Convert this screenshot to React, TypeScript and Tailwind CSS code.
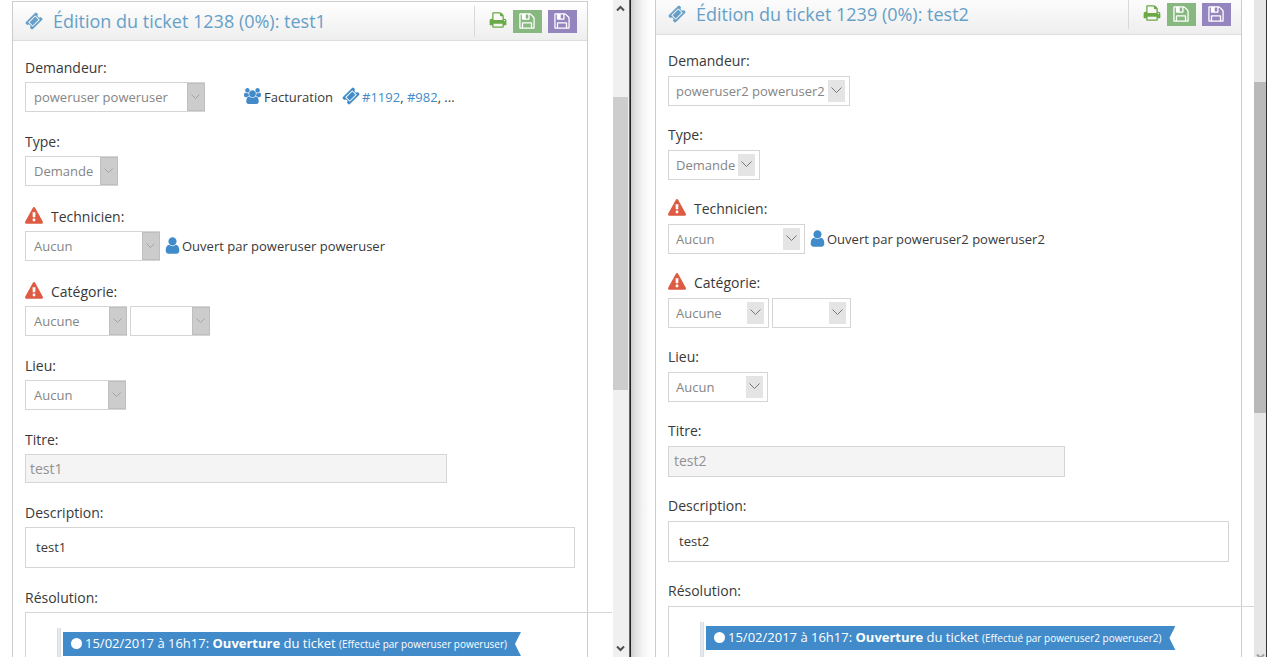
import { useId, type ReactNode } from "react";

const PATHS = {
  ticket:
    "M1024 452l316 316-572 572-316-316zm-211 979l618-618q19-19 19-45t-19-45l-362-362q-18-18-45-18t-45 18l-618 618q-19 19-19 45t19 45l362 362q18 18 45 18t45-18zm889-637l-907 908q-37 37-90.500 37t-90.500-37l-126-126q56-56 56-136t-56-136-136-56-136 56l-125-126q-37-37-37-90.500t37-90.500l907-906q37-37 90.500-37t90.500 37l125 125q-56 56-56 136t56 136 136 56 136-56l126 125q37 37 37 90.500t-37 90.500z",
  warning:
    "M1024 1375v-190q0-14-9.500-23.500t-22.500-9.500h-192q-13 0-22.500 9.500t-9.500 23.500v190q0 14 9.500 23.500t22.500 9.500h192q13 0 22.500-9.500t9.500-23.500zm-2-374l18-459q0-12-10-19-13-11-24-11h-220q-11 0-24 11-10 7-10 21l17 457q0 10 10 16.500t24 6.500h185q14 0 23.500-6.500t10.500-16.500zm-14-934l768 1408q35 63-2 126-17 29-46.500 46t-63.500 17h-1536q-34 0-63.500-17t-46.500-46q-37-63-2-126l768-1408q17-31 47-49t65-18 65 18 47 49z",
  user: "M1536 1399q0 109-62.500 187t-150.500 78h-854q-88 0-150.500-78t-62.500-187q0-85 8.500-160.500t31.500-152 58.500-131 94-89 134.500-34.500q131 128 313 128t313-128q76 0 134.500 34.500t94 89 58.500 131 31.500 152 8.500 160.500zm-256-887q0 159-112.500 271.500t-271.500 112.500-271.500-112.500-112.500-271.500 112.500-271.500 271.500-112.500 271.500 112.500 112.500 271.500z",
  group:
    "M593 896q-162 5-265 128h-134q-82 0-138-40.500t-56-118.500q0-353 124-353 6 0 43.500 21t97.500 42.500 119 21.500q67 0 133-23-5 37-5 66 0 139 81 256zm1071 637q0 120-73 189.500t-194 69.500h-874q-121 0-194-69.500t-73-189.500q0-53 3.500-103.500t14-109 26.500-108.500 43-97.500 62-81 85.500-53.500 111.500-20q10 0 43 21.500t73 48 107 48 135 21.500 135-21.500 107-48 73-48 43-21.500q61 0 111.500 20t85.500 53.500 62 81 43 97.500 26.500 108.500 14 109 3.500 103.500zm-1024-1277q0 106-75 181t-181 75-181-75-75-181 75-181 181-75 181 75 75 181zm704 384q0 159-112.500 271.500t-271.500 112.500-271.500-112.500-112.500-271.500 112.500-271.500 271.500-112.500 271.500 112.500 112.500 271.500zm576 225q0 78-56 118.500t-138 40.500h-134q-103-123-265-128 81-117 81-256 0-29-5-66 66 23 133 23 59 0 119-21.500t97.500-42.500 43.500-21q124 0 124 353zm-128-609q0 106-75 181t-181 75-181-75-75-181 75-181 181-75 181 75 75 181z",
  print:
    "M448 1536h896v-256h-896v256zm0-640h896v-384h-160q-40 0-68-28t-28-68v-160h-640v640zm1152 64q0-26-19-45t-45-19-45 19-19 45 19 45 45 19 45-19 19-45zm128 0v416q0 13-9.500 22.500t-22.500 9.500h-224v160q0 40-28 68t-68 28h-960q-40 0-68-28t-28-68v-160h-224q-13 0-22.500-9.500t-9.500-22.500v-416q0-79 56.500-135.500t135.500-56.500h64v-544q0-40 28-68t68-28h672q40 0 88 20t76 48l152 152q28 28 48 76t20 88v256h64q79 0 135.500 56.500t56.500 135.500z",
  save: "M512 1536h768v-384h-768v384zm896 0h128v-896q0-14-10-38.500t-20-34.500l-281-281q-10-10-34-20t-39-10v416q0 40-28 68t-68 28h-576q-40 0-68-28t-28-68v-416h-128v1280h128v-416q0-40 28-68t68-28h832q40 0 68 28t28 68v416zm-384-928v-320q0-13-9.500-22.500t-22.500-9.500h-192q-13 0-22.500 9.500t-9.500 22.500v320q0 13 9.500 22.500t22.500 9.500h192q13 0 22.500-9.500t9.500-22.500zm640 32v928q0 40-28 68t-68 28h-1344q-40 0-68-28t-28-68v-1344q0-40 28-68t68-28h928q40 0 88 20t76 48l280 280q28 28 48 76t20 88z",
};

function Icon({ name, className }: { name: keyof typeof PATHS; className: string }) {
  return (
    <svg
      viewBox={name === "group" ? "0 0 1920 1792" : "0 0 1792 1792"}
      className={`shrink-0 ${className}`}
      fill="currentColor"
      aria-hidden="true"
    >
      <path d={PATHS[name]} />
    </svg>
  );
}

type Variant = "flat" | "inset";

function Select({
  id,
  label,
  value,
  variant,
  width,
}: {
  id?: string;
  label?: string;
  value: string;
  variant: Variant;
  width: string;
}) {
  return (
    <span className={`grid h-[30px] items-center ${width}`}>
      <select
        id={id}
        aria-label={label}
        defaultValue={value}
        className={`col-start-1 row-start-1 h-[30px] w-full appearance-none border border-[#d5d5d5] bg-white text-[13px] leading-5 text-[#858585] ${
          variant === "flat" ? "pl-2" : "pl-[7px]"
        }`}
      >
        <option>{value}</option>
      </select>
      {variant === "flat" ? (
        <span className="pointer-events-none col-start-1 row-start-1 flex h-7 w-[18px] items-center justify-center justify-self-end border border-[#bfbfbf] bg-[#cccccc] pr-px">
          <svg width="9" height="6" viewBox="0 0 9 6" fill="none" stroke="#a3a3a3" aria-hidden="true">
            <path d="M0.500 0.500l4 4 4-4" />
          </svg>
        </span>
      ) : (
        <span className="pointer-events-none col-start-1 row-start-1 mr-[5px] flex h-[22px] w-[17px] items-center justify-center justify-self-end bg-[#e4e4e4] pb-px">
          <svg width="11" height="7" viewBox="0 0 11 7" fill="none" stroke="#777777" aria-hidden="true">
            <path d="M0.500 0.500l5 5 5-5" />
          </svg>
        </span>
      )}
    </span>
  );
}

function Field({
  label,
  htmlFor,
  warn,
  variant,
  children,
}: {
  label: string;
  htmlFor?: string;
  warn?: boolean;
  variant: Variant;
  children: ReactNode;
}) {
  const flat = variant === "flat";
  return (
    <div className={flat ? "mb-5" : "mb-[19px]"}>
      <div className={`flex items-start ${flat ? (warn ? "h-[25px] pt-px" : "h-6") : "h-[25px]"}`}>
        {warn && <Icon name="warning" className="mr-2 size-[18px] text-[#dd5a43]" />}
        <label htmlFor={htmlFor} className="text-sm leading-5">
          {label}
        </label>
      </div>
      <div className="flex items-center">{children}</div>
    </div>
  );
}

type Ticket = {
  number: string;
  title: string;
  user: string;
  variant: Variant;
  widths: [string, string, string, string, string, string];
  titleBox: string;
  header: string;
  divider: string;
  top: string;
  panel: string;
  bleed: string;
  extra?: ReactNode;
};

function TicketPanel(t: Ticket) {
  const id = useId();
  const v = t.variant;
  return (
    <section className={`border-x border-[#cccccc] ${t.panel}`}>
      <header
        className={`flex items-center border-b border-[#dddddd] bg-linear-to-b to-[#eeeeee] pr-[10px] pl-3 text-[#669fc7] ${t.header}`}
      >
        <Icon name="ticket" className="mr-[10px] size-[18px]" />
        <h1 className="grow pb-px text-lg leading-6 whitespace-nowrap">
          Édition du ticket {t.number} (0%): {t.title}
        </h1>
        <div className={`flex items-center gap-[6px] border-l border-[#d9d9d9] pl-[14px] ${t.divider}`}>
          <button type="button" aria-label="Imprimer" className="pb-[2px] text-[#69aa46]">
            <Icon name="print" className="size-[18px]" />
          </button>
          <button
            type="button"
            aria-label="Enregistrer"
            className="flex h-[23px] w-[29px] items-center justify-center bg-[#87b87f] pr-[2px] pb-px text-white"
          >
            <Icon name="save" className="size-[18px]" />
          </button>
          <button
            type="button"
            aria-label="Enregistrer et quitter"
            className="flex h-[23px] w-[29px] items-center justify-center bg-[#9585bf] pr-[2px] pb-px text-white"
          >
            <Icon name="save" className="size-[18px]" />
          </button>
        </div>
      </header>

      <form className={`px-3 ${t.top}`}>
        <Field label="Demandeur:" htmlFor={`${id}-user`} variant={v}>
          <Select id={`${id}-user`} value={`${t.user} ${t.user}`} variant={v} width={t.widths[0]} />
          {t.extra}
        </Field>
        <Field label="Type:" htmlFor={`${id}-type`} variant={v}>
          <Select id={`${id}-type`} value="Demande" variant={v} width={t.widths[1]} />
        </Field>
        <Field label="Technicien:" htmlFor={`${id}-tech`} warn variant={v}>
          <Select id={`${id}-tech`} value="Aucun" variant={v} width={t.widths[2]} />
          <Icon name="user" className="mb-[2px] ml-[3px] size-[19px] text-[#428bca]" />
          <span className="text-[13px] leading-5">
            Ouvert par {t.user} {t.user}
          </span>
        </Field>
        <Field label="Catégorie:" htmlFor={`${id}-cat`} warn variant={v}>
          <Select id={`${id}-cat`} value="Aucune" variant={v} width={t.widths[3]} />
          <span className="ml-[3px]">
            <Select label="Sous-catégorie" value="" variant={v} width={t.widths[4]} />
          </span>
        </Field>
        <Field label="Lieu:" htmlFor={`${id}-place`} variant={v}>
          <Select id={`${id}-place`} value="Aucun" variant={v} width={t.widths[5]} />
        </Field>
        <Field label="Titre:" htmlFor={`${id}-title`} variant={v}>
          <input
            id={`${id}-title`}
            defaultValue={t.title}
            readOnly
            className={`border border-[#d5d5d5] bg-[#f4f4f4] text-sm leading-5 text-[#939192] ${t.titleBox}`}
          />
        </Field>
        <Field label="Description:" htmlFor={`${id}-desc`} variant={v}>
          <textarea
            id={`${id}-desc`}
            defaultValue={t.title}
            className="block h-[41px] w-full resize-none overflow-hidden border border-[#d5d5d5] bg-white px-[10px] py-[9px] text-[13px] leading-5"
          />
        </Field>
        <div className={`text-sm leading-5 ${v === "flat" ? "h-6" : "h-[25px]"}`}>Résolution:</div>
        <div className={`flex border-t border-l border-[#d5d5d5] pt-[15px] pl-[31px] ${t.bleed}`}>
          <div className="h-40 w-1 border-x border-[#d9dce3] bg-[#e6e9ee]" />
          <div className="mt-1 ml-[2px] flex h-6 items-center bg-[#428bca] pr-[14px] pb-px pl-2 whitespace-nowrap text-white [clip-path:polygon(0_0,100%_0,calc(100%-6px)_50%,100%_100%,0_100%)]">
            <span className="mr-[3px] size-[11px] rounded-full bg-white" />
            <p className="text-[13px] leading-5">
              15/02/2017 à 16h17: <b>Ouverture</b> du ticket{" "}
              <small className="text-[10px]">
                (Effectué par {t.user} {t.user})
              </small>
            </p>
          </div>
        </div>
      </form>
    </section>
  );
}

function Caret({ up, className }: { up?: boolean; className: string }) {
  return (
    <svg
      width="9"
      height="7"
      viewBox="0 0 9 7"
      fill="none"
      stroke="currentColor"
      strokeWidth="2"
      className={`shrink-0 ${className}`}
      aria-hidden="true"
    >
      <path d={up ? "M1 5.500l3.500-3.500 3.500 3.500" : "M1 1.500l3.500 3.500 3.500-3.500"} />
    </svg>
  );
}

export default function App() {
  return (
    <main className="grid h-screen grid-cols-[631fr_636fr] overflow-hidden bg-white font-['Open_Sans',sans-serif] text-[#393939]">
      <div className="flex min-w-0 overflow-hidden border-r border-[#222222]">
        <div className="min-w-0 grow overflow-hidden pt-px">
          <TicketPanel
            number="1238"
            title="test1"
            user="poweruser"
            variant="flat"
            widths={["w-[180px]", "w-[93px]", "w-[135px]", "w-[102px]", "w-20", "w-[101px]"]}
            titleBox="h-[29px] w-[422px] px-1"
            header="h-10 border-t border-t-[#cccccc] from-white"
            divider="h-[31px]"
            top="pt-[17px]"
            panel="mr-[25px] ml-3"
            bleed="mr-[-37px]"
            extra={
              <div className="ml-[39px] flex items-center text-[13px] leading-5">
                <Icon name="group" className="mr-[3px] mb-[2px] h-4 w-[17px] text-[#428bca]" />
                Facturation
                <Icon name="ticket" className="mr-[2px] mb-[2px] ml-[9px] size-[18px] text-[#428bca]" />
                <p>
                  <a href="#1192" className="text-[#428bca]">
                    #1192
                  </a>
                  ,{" "}
                  <a href="#982" className="text-[#428bca]">
                    #982
                  </a>
                  , ...
                </p>
              </div>
            }
          />
        </div>
        <div className="flex w-[17px] shrink-0 flex-col border-r border-[#1979ca] bg-[#f0f0f0]">
          <div className="flex h-[97px] justify-center pt-[5px] pr-px">
            <Caret up className="text-[#505050]" />
          </div>
          <div className="mr-px h-[293px] bg-[#cdcdcd]" />
          <div className="flex grow items-end justify-center pr-px pb-[5px]">
            <Caret className="text-[#505050]" />
          </div>
        </div>
      </div>

      <div className="flex min-w-0 overflow-hidden border-r border-[#333333]">
        <div className="w-6 shrink-0 bg-[linear-gradient(to_right,#cfcfcf_0,#e3e3e3_5px,#f4f4f4_12px,#ffffff_20px)]" />
        <div className="min-w-0 grow overflow-hidden">
          <TicketPanel
            number="1239"
            title="test2"
            user="poweruser2"
            variant="inset"
            widths={["w-[182px]", "w-[92px]", "w-[137px]", "w-[101px]", "w-[79px]", "w-[100px]"]}
            titleBox="h-[31px] w-[397px] px-[5px] pb-[2px]"
            header="h-[35px] from-[#fcfcfc] pb-[6px]"
            divider="h-[30px]"
            top="pt-4"
            panel="mr-3"
            bleed="mr-[-25px]"
          />
        </div>
        <div className="flex w-3 shrink-0 flex-col bg-[#e6e6e6]">
          <div className="h-[82px] shrink-0" />
          <div className="h-[331px] shrink-0 bg-[#b9b9b9]" />
          <div className="flex grow items-end justify-center">
            <div className="flex h-1 items-start overflow-hidden">
              <Caret className="text-[#a0a0a0]" />
            </div>
          </div>
        </div>
      </div>
    </main>
  );
}
